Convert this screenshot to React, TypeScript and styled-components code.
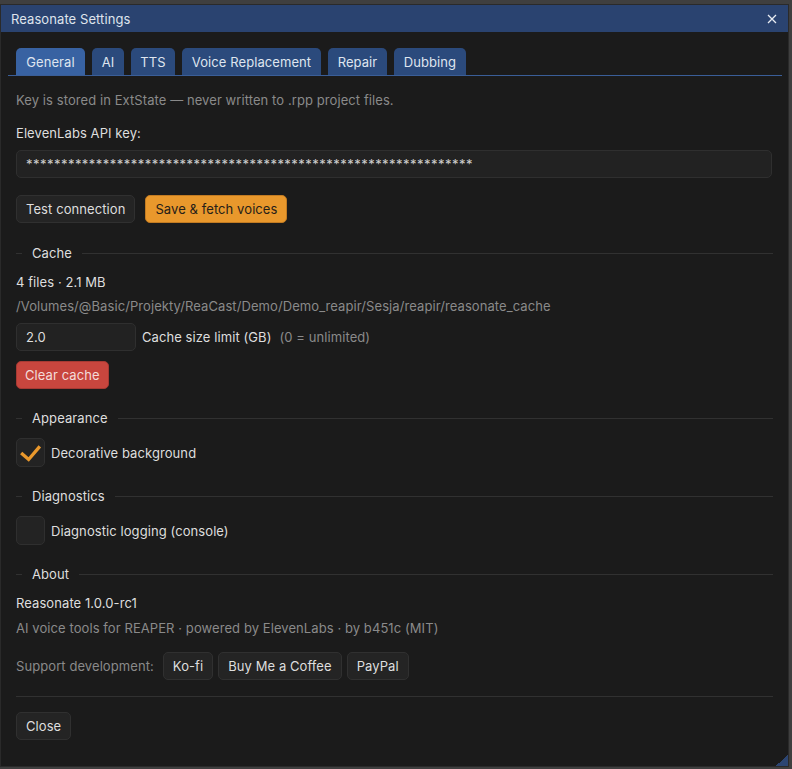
import React from "react";
import styled, { createGlobalStyle } from "styled-components";

const Global = createGlobalStyle`
  html, body { margin: 0; padding: 0; background: #3f3f3f; }
  body { font-family: Inter, "Noto Sans", sans-serif; font-size: 13px; letter-spacing: 0.08px; }
  #root { height: 769px; overflow: hidden; }
  * { box-sizing: border-box; }
`;

const Window = styled.div`
  margin-top: 4px;
  width: 789px;
  height: 763px;
  border: 1px solid #2a2a2a;
  background: #1b1b1b;
  display: flex;
  flex-direction: column;
  position: relative;
`;

const TitleBar = styled.div`
  height: 27px;
  flex: none;
  background: #2a4370;
  color: #dfe4ec;
  display: flex;
  align-items: center;
  justify-content: space-between;
  padding: 0 11px 0 10px;
  font-size: 13px;
`;

const Body = styled.div`
  padding: 16px 15px 0 15px;
  display: flex;
  flex-direction: column;
  color: #dedede;
  line-height: 16px;
`;

const TabBar = styled.div`
  display: flex;
  gap: 7px;
  margin: 0 -9px 0 -8px;
  padding-left: 8px;
  border-bottom: 1px solid #3a5e98;
`;

const Tab = styled.div<{ $active?: boolean }>`
  height: 27px;
  width: ${(p) => p.$w}px;
  flex: none;
  display: flex;
  align-items: center;
  justify-content: center;
  border-radius: 5px 5px 0 0;
  background: ${(p) => (p.$active ? "#3862a2" : "#2b4a7c")};
  color: #dfe5ef;
  white-space: nowrap;
` as any;

const Text = styled.div<{ $mt: number; $muted?: boolean }>`
  margin-top: ${(p) => p.$mt}px;
  color: ${(p) => (p.$muted ? "#8a8a8a" : "#dedede")};
  white-space: nowrap;
`;

const Field = styled.div<{ $mt?: number; $w?: number }>`
  margin-top: ${(p) => p.$mt ?? 0}px;
  height: 28px;
  width: ${(p) => (p.$w ? `${p.$w}px` : "auto")};
  flex: none;
  background: #222222;
  border: 1px solid #2f2f2f;
  border-radius: 5px;
  padding: 0 9px;
  display: flex;
  align-items: center;
  color: #dedede;
`;

const Password = styled(Field)`
  margin-right: 1px;
  letter-spacing: 0.47px;
  color: #cfcfcf;
`;

const Row = styled.div<{ $mt: number; $gap?: number }>`
  margin-top: ${(p) => p.$mt}px;
  display: flex;
  align-items: center;
  gap: ${(p) => p.$gap ?? 6}px;
`;

const Button = styled.div<{ $kind?: "default" | "accent" | "danger" }>`
  height: 28px;
  padding: 0 ${(p) => (p.$kind === "danger" ? 8 : 9)}px;
  display: inline-flex;
  align-items: center;
  border-radius: 5px;
  white-space: nowrap;
  background: ${(p) =>
    p.$kind === "accent" ? "#e9982c" : p.$kind === "danger" ? "#c8463e" : "#242424"};
  border: 1px solid
    ${(p) =>
      p.$kind === "accent" ? "#c27b22" : p.$kind === "danger" ? "#a63a33" : "#303030"};
  color: ${(p) =>
    p.$kind === "accent" ? "#262018" : p.$kind === "danger" ? "#f3dcda" : "#dedede"};
`;

const SectionHeader = styled.div<{ $mt: number }>`
  margin-top: ${(p) => p.$mt}px;
  display: flex;
  align-items: center;
  gap: 10px;
  color: #dedede;
  &::before {
    content: "";
    width: 6px;
    height: 1px;
    background: #313131;
  }
  &::after {
    content: "";
    flex: 1;
    height: 1px;
    background: #313131;
  }
`;

const CheckRow = styled.div<{ $mt: number }>`
  margin-top: ${(p) => p.$mt}px;
  display: flex;
  align-items: center;
  gap: 6px;
`;

const CheckBox = styled.div`
  width: 29px;
  height: 29px;
  border-radius: 5px;
  background: #232323;
  border: 1px solid #2f2f2f;
  display: flex;
  align-items: center;
  justify-content: center;
`;

const Separator = styled.div<{ $mt: number }>`
  margin-top: ${(p) => p.$mt}px;
  height: 1px;
  background: #313131;
`;

const Muted = styled.span`
  color: #8a8a8a;
  margin-left: 8px;
`;

const SupportLabel = styled.span`
  color: #8a8a8a;
  margin-right: 4px;
  white-space: nowrap;
`;

const Grip = styled.div`
  position: absolute;
  right: 0;
  bottom: 0;
  width: 12px;
  height: 12px;
  background: linear-gradient(135deg, transparent 50%, #2c4572 50%);
`;

const tabs: [string, number][] = [
  ["General", 69],
  ["AI", 32],
  ["TTS", 44],
  ["Voice Replacement", 139],
  ["Repair", 59],
  ["Dubbing", 72],
];

export default function App() {
  return (
    <>
      <Global />
      <Window>
        <TitleBar>
          <span>Reasonate Settings</span>
          <svg width="10" height="10" viewBox="0 0 10 10">
            <path d="M1 1 L9 9 M9 1 L1 9" stroke="#e8ecf2" strokeWidth="1.3" />
          </svg>
        </TitleBar>
        <Body>
          <TabBar>
            {tabs.map(([t, w], i) => (
              <Tab key={t} $active={i === 0} $w={w}>
                {t}
              </Tab>
            ))}
          </TabBar>
          <Text $mt={16} $muted>
            Key is stored in ExtState — never written to .rpp project files.
          </Text>
          <Text $mt={17}>ElevenLabs API key:</Text>
          <Password $mt={9}>{"*".repeat(64)}</Password>
          <Row $mt={17} $gap={10}>
            <Button>Test connection</Button>
            <Button $kind="accent">Save &amp; fetch voices</Button>
          </Row>
          <SectionHeader $mt={22}>Cache</SectionHeader>
          <Text $mt={13}>4 files · 2.1 MB</Text>
          <Text $mt={8} $muted>
            /Volumes/@Basic/Projekty/ReaCast/Demo/Demo_reapir/Sesja/reapir/reasonate_cache
          </Text>
          <Row $mt={9}>
            <Field $w={120}>2.0</Field>
            <span>
              Cache size limit (GB)
              <Muted>(0 = unlimited)</Muted>
            </span>
          </Row>
          <Row $mt={10}>
            <Button $kind="danger">Clear cache</Button>
          </Row>
          <SectionHeader $mt={21}>Appearance</SectionHeader>
          <CheckRow $mt={12}>
            <CheckBox>
              <svg width="29" height="29" viewBox="0 0 29 29">
                <path
                  d="M4.5 15 L12.5 22 L24.5 8"
                  fill="none"
                  stroke="#e9982c"
                  strokeWidth="3.6"
                />
              </svg>
            </CheckBox>
            <span>Decorative background</span>
          </CheckRow>
          <SectionHeader $mt={21}>Diagnostics</SectionHeader>
          <CheckRow $mt={12}>
            <CheckBox />
            <span>Diagnostic logging (console)</span>
          </CheckRow>
          <SectionHeader $mt={21}>About</SectionHeader>
          <Text $mt={13}>Reasonate 1.0.0-rc1</Text>
          <Text $mt={9} $muted>
            AI voice tools for REAPER · powered by ElevenLabs · by b451c (MIT)
          </Text>
          <Row $mt={16} $gap={5}>
            <SupportLabel>Support development:</SupportLabel>
            <Button>Ko-fi</Button>
            <Button>Buy Me a Coffee</Button>
            <Button>PayPal</Button>
          </Row>
          <Separator $mt={16} />
          <Row $mt={15}>
            <Button>Close</Button>
          </Row>
        </Body>
        <Grip />
      </Window>
    </>
  );
}
